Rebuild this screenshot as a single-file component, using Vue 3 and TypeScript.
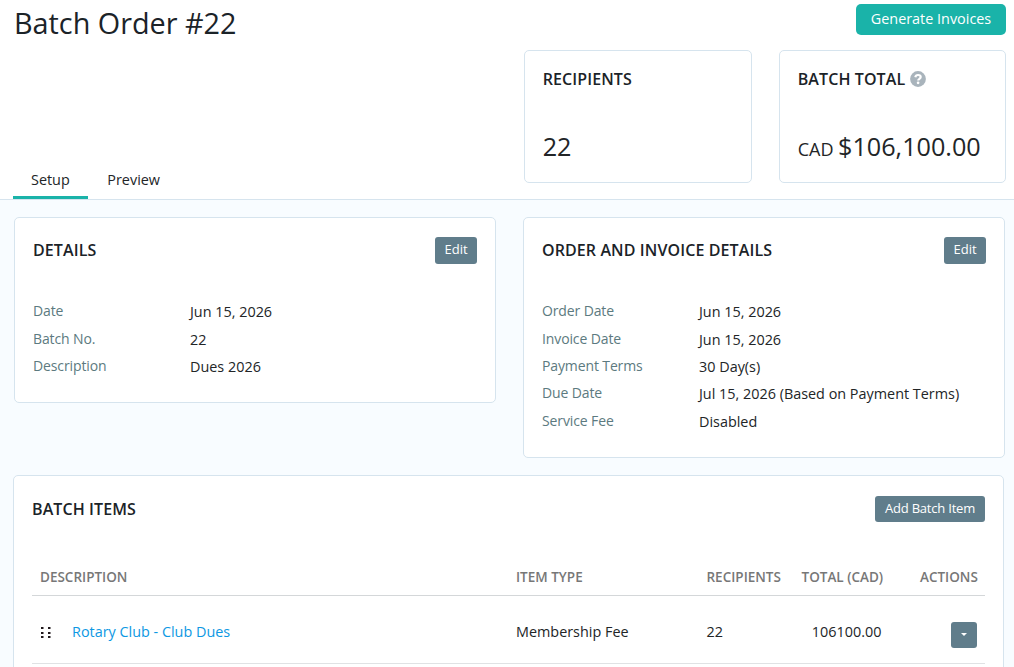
<script setup lang="ts">
interface Field {
  label: string
  value: string
}

interface Item {
  name: string
  type: string
  recipients: number
  total: string
}

const tabs: string[] = ['Setup', 'Preview']
const activeTab = 'Setup'

const details: Field[] = [
  { label: 'Date', value: 'Jun 15, 2026' },
  { label: 'Batch No.', value: '22' },
  { label: 'Description', value: 'Dues 2026' },
]

const invoiceDetails: Field[] = [
  { label: 'Order Date', value: 'Jun 15, 2026' },
  { label: 'Invoice Date', value: 'Jun 15, 2026' },
  { label: 'Payment Terms', value: '30 Day(s)' },
  { label: 'Due Date', value: 'Jul 15, 2026 (Based on Payment Terms)' },
  { label: 'Service Fee', value: 'Disabled' },
]

const items: Item[] = [
  { name: 'Rotary Club - Club Dues', type: 'Membership Fee', recipients: 22, total: '106100.00' },
]
</script>

<template>
  <div class="page">
    <header class="header">
      <div class="header-left">
        <h1 class="title">Batch Order #22</h1>
        <nav class="tabs">
          <a v-for="tab in tabs" :key="tab" class="tab" :class="{ active: tab === activeTab }">{{ tab }}</a>
        </nav>
      </div>
      <div class="header-right">
        <button class="btn-primary">Generate Invoices</button>
        <div class="stats">
          <section class="stat">
            <h2 class="heading">RECIPIENTS</h2>
            <div class="stat-value">22</div>
          </section>
          <section class="stat">
            <h2 class="heading">
              BATCH TOTAL
              <svg class="help" viewBox="0 0 16 16" width="16" height="16">
                <circle cx="8" cy="8" r="7.9" fill="#a9b4bc" />
                <path d="M5.300 6.200C5.600 4.600 6.600 4 8 4c1.600 0 2.700.8 2.700 2.100 0 1.800-2.500 1.700-2.500 3.400" fill="none" stroke="#fff" stroke-width="2.200" />
                <circle cx="8.100" cy="11.800" r="1.350" fill="#fff" />
              </svg>
            </h2>
            <div class="stat-value"><span class="currency">CAD</span> $106,100.00</div>
          </section>
        </div>
      </div>
    </header>

    <main class="content">
      <div class="panels">
        <section class="card">
          <div class="card-head">
            <h2 class="heading">DETAILS</h2>
            <button class="btn">Edit</button>
          </div>
          <dl class="fields">
            <div v-for="f in details" :key="f.label" class="field">
              <dt>{{ f.label }}</dt>
              <dd>{{ f.value }}</dd>
            </div>
          </dl>
        </section>
        <section class="card">
          <div class="card-head">
            <h2 class="heading">ORDER AND INVOICE DETAILS</h2>
            <button class="btn">Edit</button>
          </div>
          <dl class="fields">
            <div v-for="f in invoiceDetails" :key="f.label" class="field">
              <dt>{{ f.label }}</dt>
              <dd>{{ f.value }}</dd>
            </div>
          </dl>
        </section>
      </div>

      <section class="items">
        <div class="card-head">
          <h2 class="heading">BATCH ITEMS</h2>
          <button class="btn btn-add">Add Batch Item</button>
        </div>
        <div class="row row-head">
          <span class="cell-desc">DESCRIPTION</span>
          <span>ITEM TYPE</span>
          <span>RECIPIENTS</span>
          <span>TOTAL (CAD)</span>
          <span>ACTIONS</span>
        </div>
        <div v-for="item in items" :key="item.name" class="row row-item">
          <span class="cell-desc">
            <svg class="grip" viewBox="0 0 12 14" width="12" height="14" fill="#20181c">
              <rect x="1" y="2" width="2.500" height="2" />
              <rect x="8" y="2" width="2.500" height="2" />
              <rect x="1" y="7" width="2.500" height="2" />
              <rect x="8" y="7" width="2.500" height="2" />
              <rect x="1" y="11" width="2.500" height="2" />
              <rect x="8" y="11" width="2.500" height="2" />
            </svg>
            <a class="link">{{ item.name }}</a>
          </span>
          <span>{{ item.type }}</span>
          <span>{{ item.recipients }}</span>
          <span class="amount">{{ item.total }}</span>
          <span class="action">
            <button class="btn-menu" aria-label="Actions">
              <svg viewBox="0 0 6 3" width="6" height="3"><path d="M0 0h6L3 3z" fill="#fff" /></svg>
            </button>
          </span>
        </div>
      </section>
    </main>
  </div>
</template>

<style>
body {
  margin: 0;
  overflow: hidden;
}
</style>

<style scoped>
.page,
.page * {
  box-sizing: border-box;
}

.page {
  width: 1014px;
  height: 667px;
  overflow: hidden;
  display: flex;
  flex-direction: column;
  background: #f8fcff;
  color: #222527;
  font-family: 'Open Sans', 'Noto Sans', sans-serif;
  font-size: 14.4px;
  line-height: 20px;
}

button {
  border: 0;
  font-family: inherit;
  color: #fff;
}

h1,
h2,
dl,
dd {
  margin: 0;
}

.header {
  flex: none;
  height: 200px;
  display: flex;
  justify-content: space-between;
  padding: 4px 8px 0 13px;
  background: #fff;
  border-bottom: 1px solid #d6e4ee;
}

.header-left {
  display: flex;
  flex-direction: column;
  justify-content: space-between;
}

.title {
  padding-left: 1px;
  font-size: 28.8px;
  font-weight: 400;
  line-height: 38px;
  color: #1b2328;
}

.tabs {
  display: flex;
  gap: 1.600px;
}

.tab {
  height: 35px;
  padding: 6px 18px 0;
  border-bottom: 3px solid transparent;
}

.tab.active {
  border-bottom-color: #1ab3a9;
}

.header-right {
  display: flex;
  flex-direction: column;
  align-items: flex-end;
  width: 482px;
}

.btn-primary {
  width: 150px;
  height: 31px;
  padding: 0 0 2px;
  border-radius: 5px;
  background: #1ab3a9;
  font-size: 14.4px;
}

.stats {
  display: grid;
  grid-template-columns: 228px 227px;
  gap: 27px;
  margin-top: 15px;
}

.stat {
  height: 133px;
  padding: 18px 18px 18px 17.700px;
  border: 1px solid #d6e4ee;
  border-radius: 5px;
}

.heading {
  display: flex;
  align-items: center;
  gap: 5px;
  font-size: 16px;
  font-weight: 600;
  line-height: 20px;
  letter-spacing: 0.1px;
  color: #1b2328;
}

.help {
  display: block;
}

.stat-value {
  margin-top: 41px;
  font-size: 25.2px;
  line-height: 32px;
  white-space: nowrap;
}

.currency {
  margin-right: -2px;
  font-size: 18px;
}

.content {
  flex: 1;
  padding: 17px 9px 0 13px;
}

.panels {
  display: grid;
  grid-template-columns: 482px 482px;
  gap: 27px;
  align-items: start;
  padding-left: 1px;
}

.card {
  padding: 18px 18px 23.800px;
  background: #fff;
  border: 1px solid #d6e4ee;
  border-radius: 5px;
}

.card-head {
  display: flex;
  justify-content: space-between;
  align-items: center;
  height: 28px;
}

.btn {
  width: 42px;
  height: 27px;
  padding: 0 0 2px;
  border-radius: 3px;
  background: #607d8b;
  font-size: 13px;
  white-space: nowrap;
}

.btn-add {
  width: 110px;
  height: 26px;
  letter-spacing: -0.2px;
}

.fields {
  margin-top: 32.200px;
}

.field {
  display: flex;
  height: 27.400px;
  padding-top: 5px;
}

.field dt {
  width: 157px;
  color: #5c7a80;
  font-size: 14px;
  letter-spacing: -0.120px;
}

.field dd {
  padding-top: 1px;
  white-space: nowrap;
}

.items {
  width: 991px;
  height: 230px;
  margin-top: 17px;
  padding: 19px 18px 0;
  background: #fff;
  border: 1px solid #d6e4ee;
  border-radius: 5px;
}

.row {
  display: grid;
  grid-template-columns: 484px 190.500px 95px 118.500px 65px;
  align-items: center;
  white-space: nowrap;
}

.row-head {
  height: 37px;
  margin-top: 36px;
  border-bottom: 1px solid #d4d7d9;
  color: #777;
  font-size: 13.500px;
  font-weight: 600;
}

.row-item {
  height: 68px;
  padding-top: 8px;
  padding-bottom: 3px;
  border-bottom: 1px solid #e0e2e4;
}

.cell-desc {
  display: flex;
  align-items: center;
  padding-left: 8px;
}

.grip {
  margin-right: 20px;
}

.link {
  color: #0d98e3;
}

.amount {
  padding-left: 10.300px;
}

.action {
  display: flex;
  justify-content: flex-end;
  padding: 6px 8px 0 0;
}

.btn-menu {
  display: flex;
  align-items: center;
  justify-content: center;
  width: 26px;
  height: 26px;
  padding: 0;
  border-radius: 3px;
  background: #607d8b;
}
</style>
